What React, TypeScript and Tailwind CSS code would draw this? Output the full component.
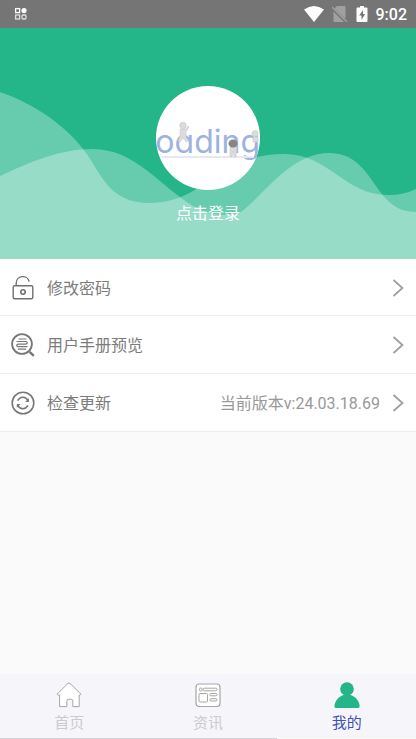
import type { ReactNode } from "react";
import clsx from "clsx";

const Chevron = () => (
  <svg className="h-5 w-3 shrink-0" viewBox="0 0 12 20" fill="none" stroke="#a0a0a0" strokeWidth="1.8">
    <path d="M1.500 2l9 8-9 8" />
  </svg>
);

const LockIcon = () => (
  <svg className="size-6" viewBox="0 0 24 24" fill="none" stroke="#707070" strokeWidth="1.4">
    <rect x="2.2" y="9.7" width="19.6" height="13" rx="1.5" />
    <path d="M5.2 9.5V7.2a6.6 6.6 0 0 1 13-1.6" />
    <circle cx="12" cy="16" r="2.2" strokeWidth="1.6" />
  </svg>
);

const ManualIcon = () => (
  <svg className="size-6" viewBox="0 0 24 24" fill="none" stroke="#777">
    <circle cx="11" cy="11" r="9.9" strokeWidth="1.8" />
    <path d="M18.6 18.8l4.2 4" strokeWidth="2.4" />
    <path
      d="M7.500 6h8M5.500 8.500h9q1.800 0 1.800 1.300t-1.800 1.300h-7q-1.800 0-1.800 1.300t1.800 1.300h9M7 16.200h8"
      strokeWidth="1.2"
    />
  </svg>
);

const UpdateIcon = () => (
  <svg className="size-6" viewBox="0 0 24 24" fill="none" stroke="#777">
    <circle cx="12" cy="12" r="10.8" strokeWidth="1.6" />
    <path d="M6.6 9.6q2-3.6 5.4-3.4 3.4.2 5 3.4M17 14.4q-2 3.4-5.2 3.3-3.4-.1-5.2-3.3" strokeWidth="1.6" />
    <path d="M17.9 7.200v3.800h-3.800zM5.800 16.800v-3.800h3.800z" fill="#777" stroke="none" />
  </svg>
);

const HomeIcon = () => (
  <svg className="size-7" viewBox="0 0 28 28" fill="#fff" stroke="#a6a6a6" strokeWidth="1">
    <path d="M2 14.2L13 3.4q1-.8 2 0l11 10.8-.8.8h-1v11.600h-6.4v-5.4q0-2-2-2h-2q-2 0-2 2v5.4H4.6V15H2.8z" />
  </svg>
);

const NewsIcon = () => (
  <svg className="size-7" viewBox="0 0 28 28" fill="#fff" stroke="#a6a6a6" strokeWidth="1">
    <rect x="2" y="4" width="24" height="22.5" rx="3" strokeWidth="1.2" />
    <circle cx="6.8" cy="9.500" r="1.5" />
    <rect x="9" y="8.200" width="14" height="2.6" rx="1.3" />
    <rect x="5" y="13.500" width="8.5" height="8.5" rx="1" />
    <rect x="16" y="13.500" width="7" height="2.3" rx="1" />
    <rect x="16" y="18.7" width="7" height="2.3" rx="1" />
  </svg>
);

const MineIcon = () => (
  <svg className="size-7" viewBox="0 0 28 28" fill="#24b588">
    <circle cx="14" cy="9" r="6.8" />
    <path d="M1.5 27q-.4-1.6.6-4C4.4 17.600 9 14.600 14 14.600s9.800 3 12 8.400q1 2.400.5 4-.3 1-1.500 1H3q-1.200 0-1.500-1z" />
  </svg>
);

const StatusBar = () => (
  <header className="flex h-7 items-center justify-between bg-[#757575] pr-[9px] pl-3.5">
    <svg className="size-3.5" viewBox="0 0 14 14" fill="none" stroke="#fff" strokeWidth="1.3">
      <rect x="1.600" y="1.600" width="4" height="4" />
      <circle cx="10" cy="3.600" r="2.600" fill="#fff" stroke="none" />
      <rect x="1.600" y="8" width="4" height="4" stroke="#ddd" />
      <rect x="8" y="8" width="4" height="4" rx="1" stroke="#ddd" />
    </svg>
    <div className="flex items-center gap-2">
      <svg className="h-4 w-5" viewBox="0 0 20 16" fill="#fff">
        <path d="M0 3.500Q10-3.500 20 3.500L10 16z" />
      </svg>
      <svg className="h-4 w-4" viewBox="0 0 16 16">
        <path d="M5 0h7.500q1 0 1 1v12L2.500 2.500zM1.500 5.500L12 16H2.500q-1 0-1-1z" fill="#a0a0a0" />
        <path d="M0 1l15 15" stroke="#a0a0a0" strokeWidth="1.400" />
      </svg>
      <svg className="h-4 w-3" viewBox="0 0 12 16">
        <path d="M4 0h4v1.600h2.500q1 0 1 1V15q0 1-1 1h-9q-1 0-1-1V2.600q0-1 1-1H4z" fill="#fff" />
        <path d="M7 4L3.200 9.500H5.500V14l3.600-6H7z" fill="#757575" />
      </svg>
      <span className="pt-0.5 text-base font-medium text-white">9:02</span>
    </div>
  </header>
);

const Waves = () => (
  <svg
    className="absolute inset-0 h-full w-full"
    viewBox="0 28 416 231"
    preserveAspectRatio="none"
    fill="#fff"
    fillOpacity="0.31"
  >
    <path d="M0 92C34 104 64 124 84 150C102 174 108 203 150 203C204 203 220 154 284 154C330 154 344 195 388 195Q404 195 416 189V259H0z" />
    <path d="M0 176C30 162 60 149 93 149C135 149 160 186 193 206Q216 220 241 212C262 197 290 153 329 153C376 153 372 212 416 212V259H0z" />
  </svg>
);

const Avatar = () => (
  <span className="relative block size-26 overflow-hidden rounded-full bg-white">
    <span className="absolute top-9 right-0 font-['Inter'] text-[32px] leading-10 text-[#9db3de] [font-feature-settings:'cv11']">
      oading
    </span>
    <svg className="absolute inset-0 h-full w-full" viewBox="0 0 104 104">
      <path d="M6 71h92" stroke="#e6e9f5" strokeWidth="2" />
      <g fill="#dcdcdc" stroke="#c4c4c4" strokeWidth=".5">
        <circle cx="27" cy="39.500" r="3.300" />
        <path d="M24 43h6l2-3 1 1-3 5v5l2 4-2 1-3-4-3 4-2-1 2-5z" />
        <circle cx="99" cy="47.500" r="3" />
        <path d="M97 51h5v5h-5z" />
        <path d="M74 61h7l-1 10h-2l-1-6-1 6h-2z" />
      </g>
      <ellipse cx="77" cy="57.500" rx="4.500" ry="4" fill="#8a8583" />
    </svg>
  </span>
);

type RowProps = { icon: ReactNode; label: string; value?: string };

const Row = ({ icon, label, value }: RowProps) => (
  <li className="h-[58px] first:h-[57px]">
    <button className="flex h-full w-full items-center border-b border-[#ececec] bg-white pt-px pr-3 pl-[11px] text-base">
      {icon}
      <span className="ml-3 pt-0.5 text-[#7c7c7c]">{label}</span>
      <span className="mr-3 ml-auto pt-0.5 text-[#999]">{value}</span>
      <Chevron />
    </button>
  </li>
);

type TabProps = { icon: ReactNode; label: string; active?: boolean };

const Tab = ({ icon, label, active }: TabProps) => (
  <a
    href="#"
    aria-current={active ? "page" : undefined}
    className={clsx(
      "flex flex-1 flex-col items-center border-b pt-1.5 text-[15px] leading-6",
      active ? "border-[#fafafa] text-[#3f51b5]" : "border-[#d4d4d8] text-[#cbcbcf]"
    )}
  >
    {icon}
    <span className="mt-[3px]">{label}</span>
  </a>
);

const App = () => {
  return (
    <div className="flex min-h-screen flex-col bg-[#fafafa] font-[Roboto,'Noto_Sans_CJK_SC',sans-serif]">
      <StatusBar />

      <section className="relative h-[231px] bg-[#24b588]">
        <Waves />
        <button className="relative mx-auto flex flex-col items-center pt-[58px] text-base text-white">
          <Avatar />
          <span className="mt-3">点击登录</span>
        </button>
      </section>

      <ul className="flex-1">
        <Row icon={<LockIcon />} label="修改密码" />
        <Row icon={<ManualIcon />} label="用户手册预览" />
        <Row icon={<UpdateIcon />} label="检查更新" value="当前版本v:24.03.18.69" />
      </ul>

      <nav className="flex h-[65px] bg-[#f6f6fa]">
        <Tab icon={<HomeIcon />} label="首页" />
        <Tab icon={<NewsIcon />} label="资讯" />
        <Tab icon={<MineIcon />} label="我的" active />
      </nav>
    </div>
  );
};

export default App;
